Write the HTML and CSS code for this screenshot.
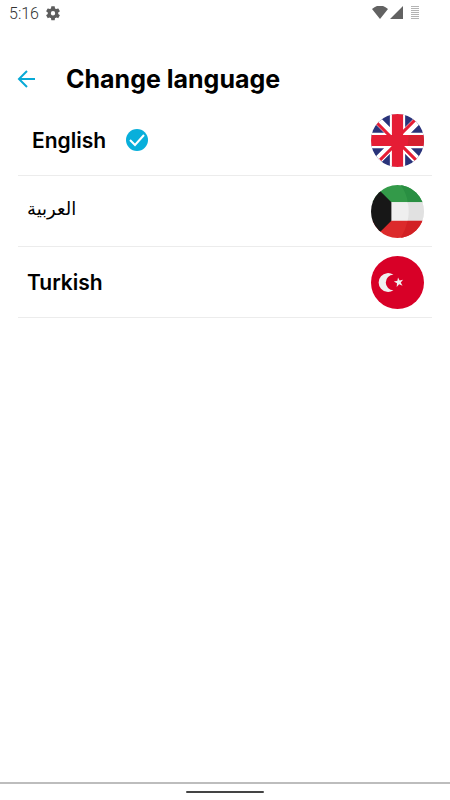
FILE: index.html
```html
<!DOCTYPE html>
<html lang="en">
<head>
<meta charset="utf-8">
<meta name="viewport" content="width=device-width, initial-scale=1">
<title>Change language</title>
<link rel="stylesheet" href="styles.css">
</head>
<body>
<div class="status">
  <span class="clock">5:16</span>
  <svg class="gear" viewBox="1 2 22 22" aria-hidden="true"><path fill="#5c5c5c" d="M19.14 12.94c.04-.3.06-.61.06-.94s-.02-.64-.07-.94l2.03-1.58a.49.49 0 0 0 .12-.61l-1.92-3.32a.49.49 0 0 0-.59-.22l-2.39.96c-.5-.38-1.03-.7-1.62-.94l-.36-2.54a.48.48 0 0 0-.48-.41h-3.84a.47.47 0 0 0-.47.41l-.36 2.54c-.59.24-1.13.57-1.62.94l-2.39-.96a.48.48 0 0 0-.59.22L2.74 8.87a.47.47 0 0 0 .12.61l2.03 1.58c-.05.3-.09.63-.09.94s.02.64.07.94l-2.03 1.58a.49.49 0 0 0-.12.61l1.92 3.32c.12.22.37.29.59.22l2.39-.96c.5.38 1.03.7 1.62.94l.36 2.54c.05.24.24.41.48.41h3.84c.24 0 .44-.17.47-.41l.36-2.54c.59-.24 1.13-.56 1.62-.94l2.39.96c.22.08.47 0 .59-.22l1.92-3.32a.47.47 0 0 0-.12-.61zM12 15a3 3 0 1 1 0-6 3 3 0 0 1 0 6z"/></svg>
  <svg class="signals" viewBox="0 0 50 16" aria-hidden="true">
    <path fill="#626262" d="M0 3Q8-4 16 3L8 13ZM31 0V13H18Z"/>
    <path stroke="#b4b4b4" d="M39 .5h8M39 2.500h8M39 4.500h8M39 6.500h8M39 8.500h8M39 10.500h8M39 12.500h8"/>
  </svg>
</div>
<header class="header">
  <button class="back" type="button" aria-label="Back">
    <svg viewBox="0 0 20 20" aria-hidden="true"><path fill="none" stroke="#08a9d6" stroke-width="2" d="M19 10H3M11 2L3 10l8 8"/></svg>
  </button>
  <h1>Change language</h1>
</header>
<main class="languages">
  <button class="language selected" type="button" aria-pressed="true">
    <span>English</span>
    <svg class="check" viewBox="0 0 22 22" aria-hidden="true"><circle cx="11" cy="11" r="11" fill="#08afdb"/><path fill="none" stroke="#fff" stroke-width="2" d="M4 11l5 5 9-10"/></svg>
    <svg class="flag" viewBox="0 0 52 52" aria-hidden="true">
      <clipPath id="uk"><circle cx="26" cy="26" r="26"/></clipPath>
      <g clip-path="url(#uk)">
        <path fill="#29337a" d="M0 0h52v52H0z"/>
        <path stroke="#fff" stroke-width="8" d="M0 0l52 52M52 0L0 52"/>
        <path stroke="#fff" stroke-width="15" d="M26 0v52M0 26h52"/>
        <path stroke="#e51d35" stroke-width="3" d="M5 8l18 18M46 47L28 29M43 6L25 24M9 45l18-18"/>
        <path stroke="#e51d35" stroke-width="11" d="M26 0v52M0 26h52"/>
        <path fill="#d32030" d="M37 21h15v10H36z"/>
      </g>
    </svg>
  </button>
  <button class="language arabic" type="button" lang="ar">
    <span>العربية</span>
    <svg class="flag" viewBox="0 0 52 52" aria-hidden="true">
      <clipPath id="kw"><circle cx="26" cy="26" r="26"/></clipPath>
      <g clip-path="url(#kw)">
        <path fill="#339a49" d="M0 0h52v17H0z"/>
        <path fill="#efefef" d="M0 17h52v18H0z"/>
        <path fill="#dc2a2b" d="M0 35h52v17H0z"/>
        <path fill="#298f42" d="M29 0h23v17H36Q35 8 29 0z"/>
        <path fill="#e1e1e1" d="M36 17h16v18H36Q38 26 36 17z"/>
        <path fill="#d22024" d="M36 35h16v17H29Q34 44 36 35z"/>
        <path fill="#171717" d="M0 0h3l17 17v18L3 52H0z"/>
      </g>
    </svg>
  </button>
  <button class="language" type="button">
    <span>Turkish</span>
    <svg class="flag" viewBox="0 0 52 52" aria-hidden="true">
      <circle cx="26" cy="26" r="26" fill="#d80027"/>
      <path fill="#f0f0f0" d="M22 18.500a9.200 9.200 0 1 0 0 15a7.500 7.500 0 1 1 0-15zM26.500 21l1.600 3 3.400-.6-2.300 2.600 1.700 3.200-3.300-1.400-2.400 2.600.3-3.600-3.100-1.700 3.500-.8z"/>
    </svg>
  </button>
</main>
<footer class="nav"><span class="handle"></span></footer>
</body>
</html>
```

FILE: styles.css
```css
* { box-sizing: border-box; }

body {
  margin: 0;
  min-height: 100vh;
  display: flex;
  flex-direction: column;
  background: #fff;
  color: #000;
  font-family: Inter, "Liberation Sans", sans-serif;
}

button {
  padding: 0;
  border: 0;
  background: none;
  color: inherit;
  font: inherit;
  cursor: pointer;
}

svg { display: block; flex: none; }

.status {
  display: flex;
  align-items: center;
  height: 28px;
  padding: 0 28px 0 9px;
}

.clock {
  font: 300 16px/20px Roboto, sans-serif;
  color: #333;
}

.gear { width: 16px; height: 16px; margin-left: 6px; }
.signals { width: 50px; height: 16px; margin-left: auto; }

.header {
  display: flex;
  align-items: center;
  gap: 30px;
  height: 77px;
  padding: 24px 16px 0;
}

.back svg { width: 20px; height: 20px; }

h1 {
  margin: 0;
  font-size: 25px;
  line-height: 32px;
  font-weight: 700;
}

.languages {
  display: flex;
  flex-direction: column;
  padding: 0 18px;
}

.language {
  display: flex;
  align-items: center;
  height: 71px;
  padding: 0 8px 0 9px;
  border-bottom: 1px solid #ececec;
  font-size: 21px;
  line-height: 29px;
  font-weight: 600;
}

.selected { padding-left: 14px; }

.arabic {
  font-family: "Noto Sans", "DejaVu Sans", sans-serif;
  font-size: 18px;
  font-weight: 400;
}

.arabic span { padding-bottom: 6px; }

.check { width: 22px; height: 22px; margin-left: 20px; }
.flag { width: 53px; height: 53px; margin-left: auto; }

.nav {
  display: flex;
  justify-content: center;
  align-items: center;
  height: 18px;
  margin-top: auto;
  border-top: 2px solid #bdbdbd;
}

.handle {
  width: 78px;
  height: 2px;
  border-radius: 1px;
  background: #444;
}
```
